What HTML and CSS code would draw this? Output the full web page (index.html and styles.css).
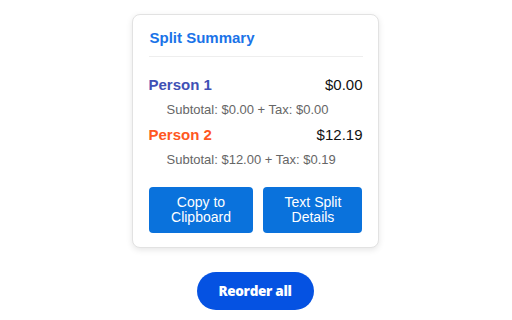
FILE: index.html
```html
<!DOCTYPE html>
<html>
<head>
<meta charset="utf-8">
<link rel="stylesheet" href="styles.css">
</head>
<body>
<div class="page">
  <div class="card">
    <h2 class="title">Split Summary</h2>
    <div class="person">
      <div class="row">
        <span class="name p1">Person 1</span>
        <span class="amount">$0.00</span>
      </div>
      <div class="sub">Subtotal: $0.00 + Tax: $0.00</div>
    </div>
    <div class="person">
      <div class="row">
        <span class="name p2">Person 2</span>
        <span class="amount">$12.19</span>
      </div>
      <div class="sub">Subtotal: $12.00 + Tax: $0.19</div>
    </div>
    <div class="actions">
      <button class="btn">Copy to Clipboard</button>
      <button class="btn">Text Split Details</button>
    </div>
  </div>
  <button class="reorder">Reorder all</button>
</div>
</body>
</html>
```

FILE: styles.css
```css
html, body {
  margin: 0;
  padding: 0;
  background: #fff;
}
body {
  font-family: "Liberation Sans", Arial, sans-serif;
}
.page {
  display: flex;
  flex-direction: column;
  align-items: center;
  padding-top: 14px;
  padding-right: 2px;
}
.card {
  box-sizing: border-box;
  width: 247px;
  padding: 14px 15px 14px 16px;
  border: 1px solid #e2e2e2;
  border-radius: 8px;
  box-shadow: 0 2px 6px rgba(0,0,0,0.10);
  background: #fff;
}
.title {
  margin: 0;
  font-size: 15px;
  font-weight: bold;
  color: #1a73e8;
  line-height: 17px;
  padding: 0 0 10px 1px;
  border-bottom: 1px solid #eeeeee;
  margin-bottom: 19px;
}
.person {
  display: flex;
  flex-direction: column;
}
.row {
  display: flex;
  justify-content: space-between;
  align-items: baseline;
  line-height: 17px;
  font-size: 15px;
}
.name {
  font-weight: bold;
}
.p1 { color: #3f51b5; }
.p2 { color: #ff5722; }
.amount {
  color: #111;
}
.sub {
  font-size: 13px;
  line-height: 15px;
  color: #666;
  padding-left: 18px;
  margin-top: 9px;
  margin-bottom: 9px;
}
.actions {
  display: grid;
  grid-template-columns: 106fr 100fr;
  column-gap: 10px;
  margin-top: 11px;
}
.btn {
  box-sizing: border-box;
  background: #0a72dc;
  color: #fff;
  border: none;
  border-radius: 4px;
  font-family: "Liberation Sans", Arial, sans-serif;
  font-size: 14px;
  line-height: 15px;
  padding: 8px 8px;
  height: 46px;
}
.reorder {
  margin-top: 24px;
  width: 117px;
  height: 38px;
  border: none;
  border-radius: 19px;
  background: #0552e2;
  color: #fff;
  font-family: "Open Sans", sans-serif;
  font-weight: 800;
  font-size: 13.5px;
  letter-spacing: -0.3px;
}
```
